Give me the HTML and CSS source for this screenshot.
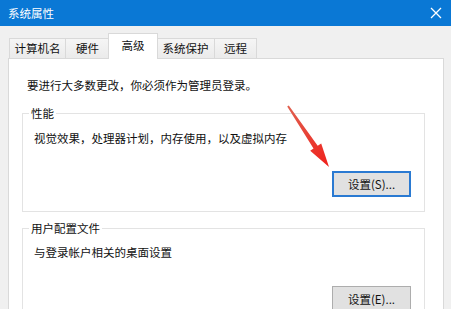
FILE: index.html
```html
<!DOCTYPE html>
<html lang="zh-CN">
<head>
  <meta charset="UTF-8">
  <title>系统属性</title>
  <link rel="stylesheet" href="styles.css">
</head>
<body>
  <div class="window">
    <div class="titlebar">
      <span class="title">系统属性</span>
      <svg class="close" width="12" height="12" viewBox="0 0 12 12">
        <path d="M1 1 L11 11 M11 1 L1 11" stroke="#fff" stroke-width="1.3"/>
      </svg>
    </div>

    <div class="tabs">
      <div class="tab t1">计算机名</div>
      <div class="tab t2">硬件</div>
      <div class="tab active">高级</div>
      <div class="tab t4">系统保护</div>
      <div class="tab t5">远程</div>
    </div>

    <div class="panel">
      <p class="intro">要进行大多数更改，你必须作为管理员登录。</p>

      <fieldset class="group g1">
        <legend>性能</legend>
        <p class="desc">视觉效果，处理器计划，内存使用，以及虚拟内存</p>
        <div class="actions">
          <button class="btn default">设置(S)...</button>
        </div>
      </fieldset>

      <fieldset class="group g2">
        <legend>用户配置文件</legend>
        <p class="desc">与登录帐户相关的桌面设置</p>
        <div class="actions">
          <button class="btn">设置(E)...</button>
        </div>
      </fieldset>
    </div>

    <!-- red annotation arrow -->
    <svg class="arrow" width="451" height="309" viewBox="0 0 451 309">
      <defs>
        <linearGradient id="ar" x1="288" y1="106" x2="329" y2="167" gradientUnits="userSpaceOnUse">
          <stop offset="0" stop-color="#e0604f"/>
          <stop offset="1" stop-color="#f0211c"/>
        </linearGradient>
      </defs>
      <polygon fill="url(#ar)" points="287.2,106.6 288.8,105.4 317.7,145.7 321.2,143.4 329,167 310.2,150.8 313.5,148.5"/>
    </svg>
  </div>
</body>
</html>
```

FILE: styles.css
```css
body {
    margin: 0;
    font-family: "Noto Sans CJK SC", "Noto Sans", sans-serif;
    font-size: 11.5px;
    color: #111;
    background: #f0f0f0;
    overflow: hidden;
}
.window {
    position: relative;
    width: 451px;
    height: 309px;
    overflow: hidden;
    background: #f0f0f0;
}
.titlebar {
    height: 26px;
    background: #0a78d5;
    color: #fff;
    display: flex;
    align-items: center;
    justify-content: space-between;
    padding: 0 8px 0 8px;
}
.title {
    font-size: 11.5px;
    line-height: 16px;
}
.close {
    margin-right: 1px;
}
.tabs {
    display: flex;
    align-items: flex-end;
    padding-left: 9px;
    margin-top: 8px;
    height: 24px;
    position: relative;
    z-index: 1;
}
.tab {
    height: 19px;
    line-height: 18px;
    border: 1px solid #d9d9d9;
    border-bottom: none;
    border-left: none;
    background: linear-gradient(#f5f5f5, #ebebeb);
    text-align: center;
    box-sizing: content-box;
}
.tab.t1 {
    width: 55px;
    border-left: 1px solid #d9d9d9;
}
.tab.t2 {
    width: 43px;
    padding-right: 1px;
}
.tab.t4 {
    width: 57px;
}
.tab.t5 {
    width: 41px;
}
.tab.active {
    width: 48px;
    height: 24px;
    line-height: 22px;
    margin: 0 -1px -1px -3px;
    padding-bottom: 1px;
    border-left: 1px solid #d9d9d9;
    background: #fff;
    position: relative;
    z-index: 2;
}
.panel {
    margin: 0 7px 0 8px;
    height: 260px;
    background: #fff;
    border: 1px solid #d9d9d9;
    padding: 18px 18px 0 13px;
}
.intro {
    margin: 0 0 0 5px;
    line-height: 16px;
}
.group {
    margin: 12px 0 0 0;
    border: 1px solid #e3e3e3;
    padding: 9px 13px 14px 11px;
}
.group legend {
    margin-left: -5px;
    padding: 0 2px;
    line-height: 16px;
}
.group.g2 {
    margin-top: 8px;
    padding-top: 8px;
}
.desc {
    margin: 0;
    line-height: 16px;
}
.actions {
    display: flex;
    justify-content: flex-end;
    margin-top: 25px;
}
.g2 .actions {
    margin-top: 26px;
}
.btn {
    width: 79px;
    height: 26px;
    font-family: inherit;
    font-size: 11.5px;
    color: #111;
    background: #e1e1e1;
    border: 1px solid #adadad;
    padding: 0;
}
.btn.default {
    border: 2px solid #2a7ad2;
}
.arrow {
    position: absolute;
    left: 0;
    top: 0;
    pointer-events: none;
    z-index: 5;
}
```
